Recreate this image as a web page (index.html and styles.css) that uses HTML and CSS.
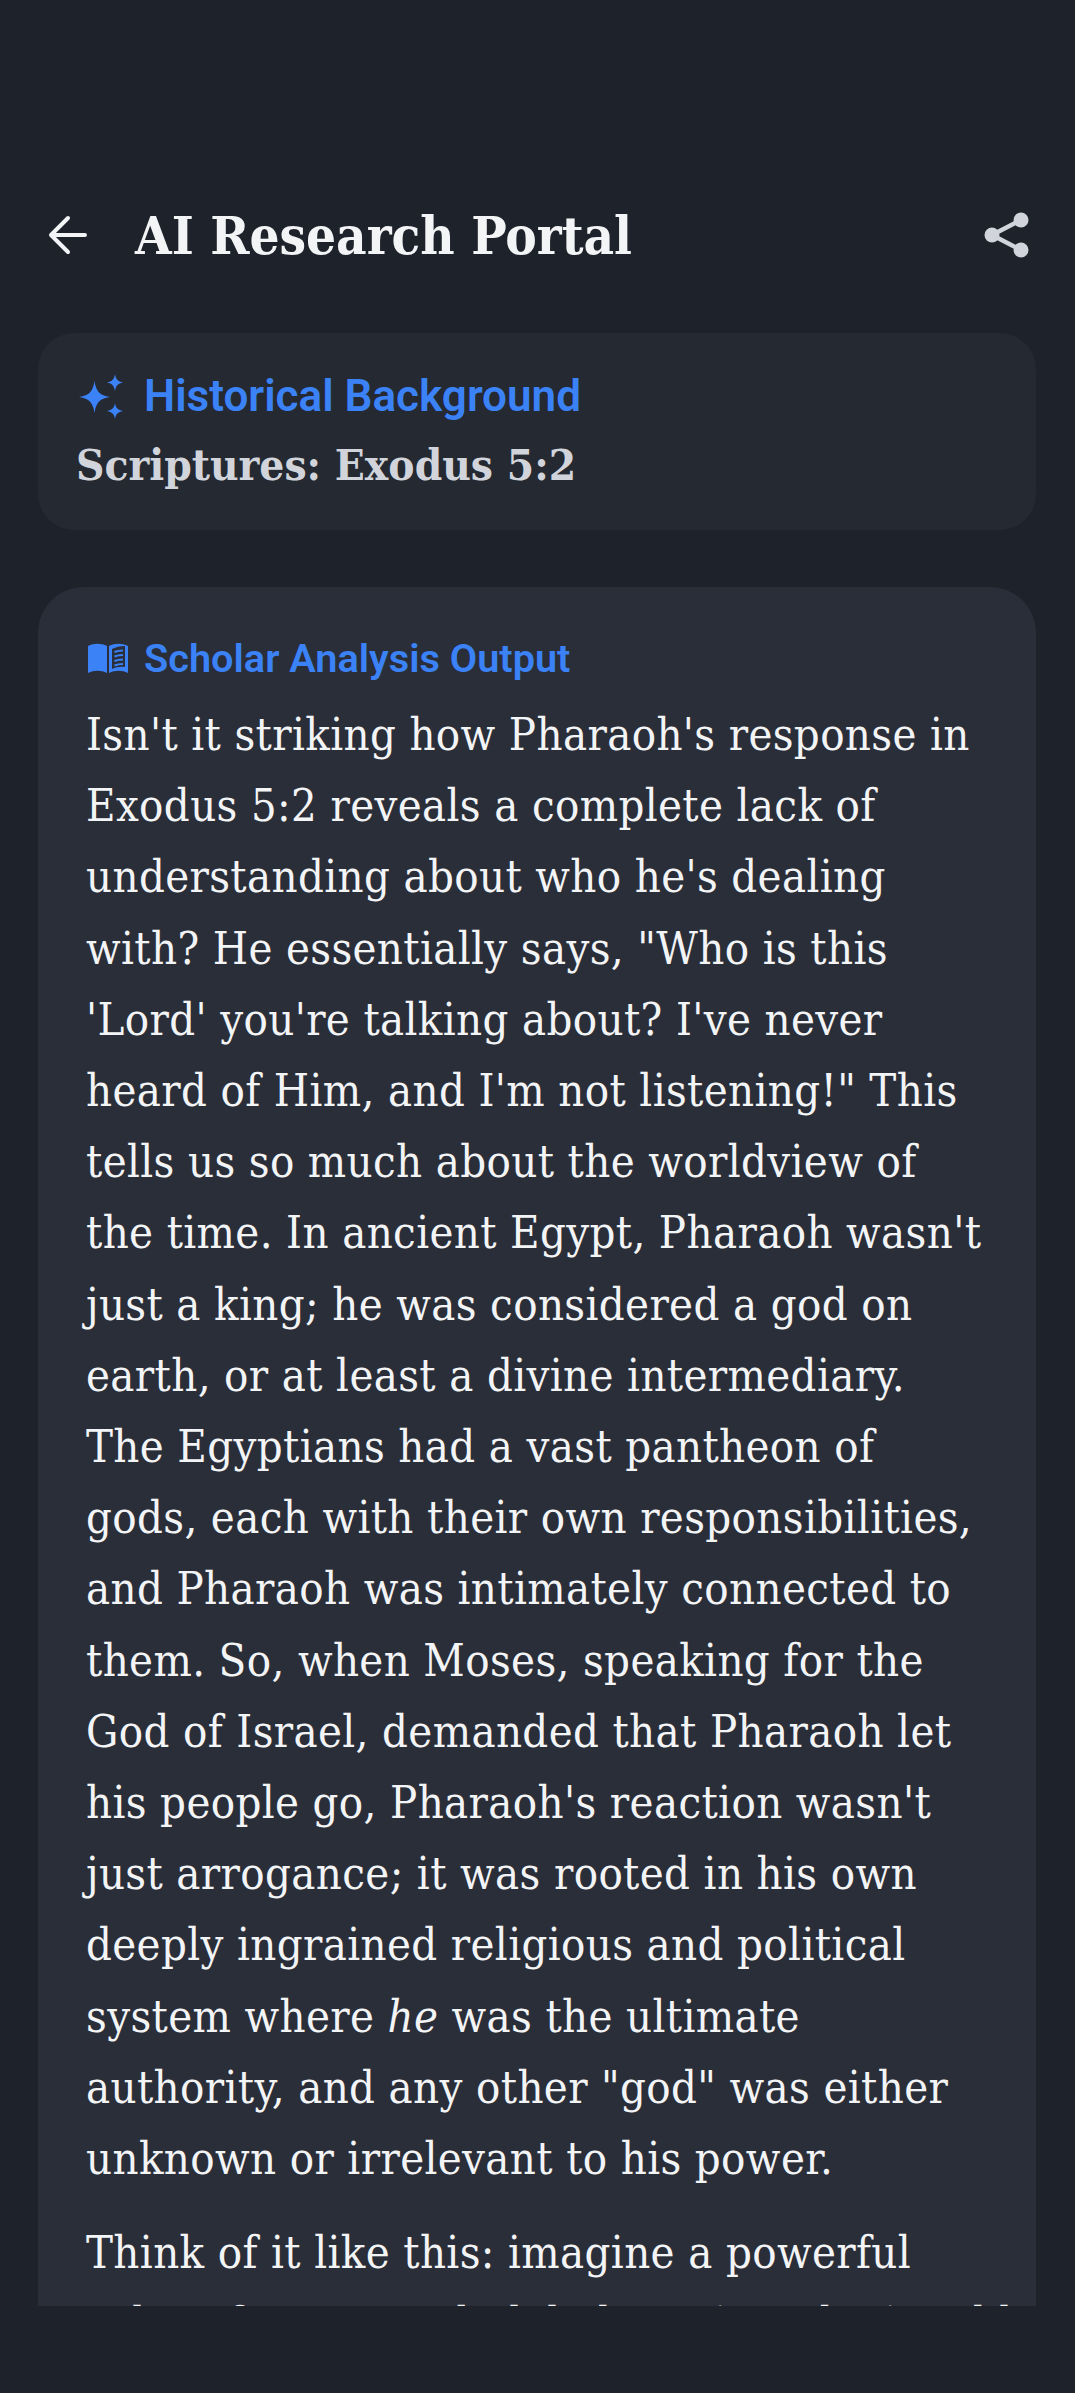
FILE: index.html
```html
<!DOCTYPE html>
<html lang="en">
  <head>
    <meta charset="UTF-8" />
    <meta name="viewport" content="width=device-width, initial-scale=1.0" />
    <title>AI Research Portal</title>
    <link rel="stylesheet" href="styles.css">
  </head>
  <body>
    <div class="screen">
      <!-- Header -->
      <header class="header">
        <svg class="back-icon" viewBox="0 0 40 40" fill="none" stroke="#f3f4f6" stroke-width="4" stroke-linecap="round" stroke-linejoin="round">
          <path d="M37 20H4M20 3L3 20l17 17" />
        </svg>
        <h1 class="title">AI Research Portal</h1>
        <svg class="share-icon" viewBox="0 0 46 46" fill="#d1d5db">
          <circle cx="37" cy="8" r="7.500" />
          <circle cx="8" cy="23" r="7.500" />
          <circle cx="37" cy="38" r="7.500" />
          <path d="M8 23L37 8M8 23l29 15" stroke="#d1d5db" stroke-width="4.500" />
        </svg>
      </header>

      <div class="content">
        <!-- Topic card -->
        <section class="topic-card">
          <div class="topic-label">
            <svg class="spark-icon" viewBox="0 0 44 45" fill="#3b82f6">
              <path d="M15.500 7c1.500 10 5 14.500 15.500 16-10.500 1.500-14 6-15.500 16-1.500-10-5-14.500-15.500-16 10.500-1.500 14-6 15.500-16z" />
              <path d="M36 0c.8 5 2.800 7.600 8 8.500-5.200.9-7.200 3.500-8 8.500-.8-5-2.800-7.600-8-8.500 5.200-.9 7.200-3.500 8-8.500z" />
              <path d="M36 29c.8 5 2.800 7 8 8-5.200 1-7.200 3-8 8-.8-5-2.800-7-8-8 5.200-1 7.200-3 8-8z" />
            </svg>
            <span>Historical Background</span>
          </div>
          <div class="topic-ref">Scriptures: Exodus 5:2</div>
        </section>

        <!-- Analysis card, runs off the bottom of the scroll area -->
        <section class="analysis-card">
          <div class="analysis-label">
            <svg class="book-icon" viewBox="0 0 40 30" fill="#3b82f6">
              <path d="M0 3C6 0 13 0 19 3V30C13 27 6 27 0 30Z" />
              <path fill-rule="evenodd" d="M21 3C27 0 34 0 40 3V30C34 27 27 27 21 30ZM24 6V26C28 24 33 23.500 37 24V3C32 3 28 4 24 6Z" />
              <path d="M26.500 9C29 8 32 7.500 35 7.500M26.500 13.500C29 12.500 32 12 35 12M26.500 18C29 17 32 16.500 35 16.500M26.500 22.500C29 21.500 32 21 35 21" fill="none" stroke="#3b82f6" stroke-width="2" />
            </svg>
            <span>Scholar Analysis Output</span>
          </div>
          <p class="analysis-text">Isn't it striking how Pharaoh's response in<br>Exodus 5:2 reveals a complete lack of<br>understanding about who he's dealing<br>with? He essentially says, "Who is this<br>'Lord' you're talking about? I've never<br>heard of Him, and I'm not listening!" This<br>tells us so much about the worldview of<br>the time. In ancient Egypt, Pharaoh wasn't<br>just a king; he was considered a god on<br>earth, or at least a divine intermediary.<br>The Egyptians had a vast pantheon of<br>gods, each with their own responsibilities,<br>and Pharaoh was intimately connected to<br>them. So, when Moses, speaking for the<br>God of Israel, demanded that Pharaoh let<br>his people go, Pharaoh's reaction wasn't<br>just arrogance; it was rooted in his own<br>deeply ingrained religious and political<br>system where <em>he</em> was the ultimate<br>authority, and any other "god" was either<br>unknown or irrelevant to his power.</p>
          <p class="analysis-text">Think of it like this: imagine a powerful<br>ruler of a vast and global empire who is told</p>
        </section>
      </div>
    </div>
  </body>
</html>
```

FILE: styles.css
```css
* {
  margin: 0;
  padding: 0;
  box-sizing: border-box;
}

body {
  background-color: #1e222a;
  font-family: "DejaVu Serif Condensed", "DejaVu Serif", serif;
  overflow: hidden;
}

.screen {
  display: flex;
  flex-direction: column;
  height: 2393px;
  padding-bottom: 87px;
}

.header {
  display: flex;
  align-items: center;
  height: 72px;
  margin: 199px 45px 26px 48px;
  gap: 47px;
}

.back-icon {
  width: 40px;
  height: 40px;
  flex: none;
}

.title {
  flex: 1;
  font-size: 52.5px;
  font-weight: 700;
  color: #f3f4f6;
}

.share-icon {
  width: 46px;
  height: 46px;
  flex: none;
}

.content {
  flex: 1;
  min-height: 0;
  overflow: hidden;
  margin: 0 39px 0 38px;
}

.topic-card {
  height: 197px;
  padding: 38px 38px 0;
  margin: 36px 0 57px;
  background-color: #252932;
  border-radius: 36px;
}

.topic-label {
  display: flex;
  align-items: center;
  gap: 21px;
  height: 50px;
  font-family: Roboto, sans-serif;
  font-size: 44px;
  font-weight: 600;
  color: #3b82f6;
}

.spark-icon {
  width: 44px;
  height: 45px;
  margin-left: 3px;
  flex: none;
}

.topic-ref {
  margin-top: 18px;
  font-size: 43.8px;
  font-weight: 700;
  color: #d1d5db;
}

.analysis-card {
  padding: 49px 48px;
  background-color: #2a2e39;
  border-radius: 46px;
}

.analysis-label {
  display: flex;
  align-items: center;
  gap: 16px;
  height: 44px;
  margin-bottom: 19px;
  font-family: Roboto, sans-serif;
  font-size: 39.7px;
  font-weight: 600;
  color: #3b82f6;
}

.book-icon {
  width: 40px;
  height: 30px;
  margin-left: 2px;
  flex: none;
}

.analysis-text {
  font-size: 45px;
  letter-spacing: 0.37px;
  line-height: 71.2px;
  white-space: nowrap;
  color: #f3f4f6;
  margin-bottom: 23px;
}
```
